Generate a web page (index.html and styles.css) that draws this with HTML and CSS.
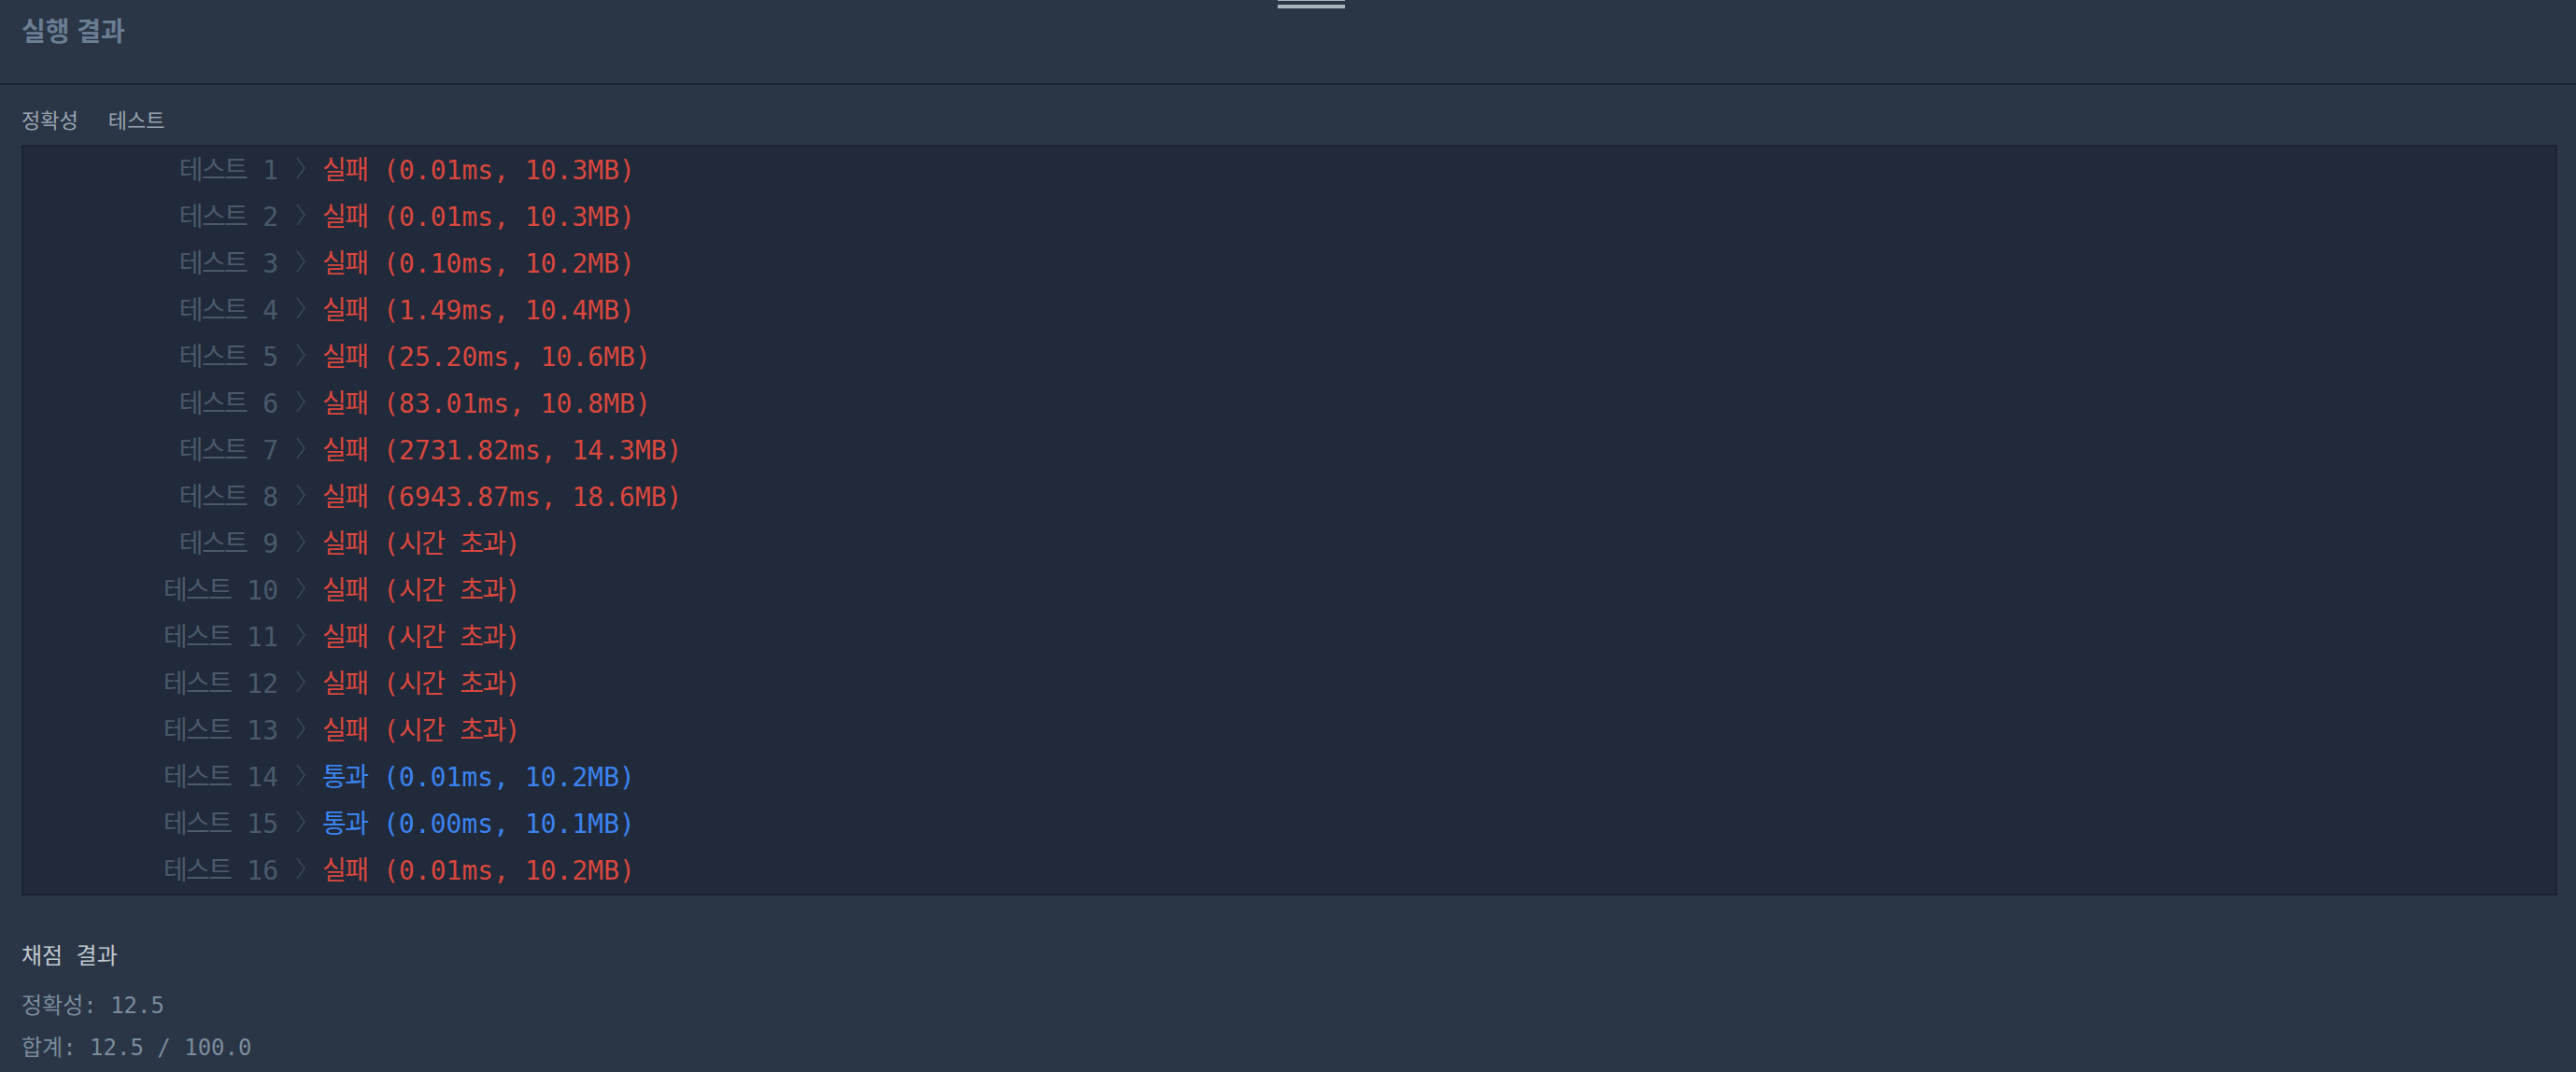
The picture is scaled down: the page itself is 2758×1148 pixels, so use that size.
FILE: index.html
```html
<!DOCTYPE html>
<html lang="ko">
<head>
    <meta charset="UTF-8">
    <meta name="viewport" content="width=device-width, initial-scale=1.0">
    <title>실행 결과</title>
    <link rel="stylesheet" href="styles.css">
</head>
<body>

    <div class="resize-handle">
        <span class="bar bar-top"></span>
        <span class="bar bar-bottom"></span>
    </div>

    <div class="header">
        <h2 class="title">실행 결과</h2>
    </div>

    <div class="content">
        <div class="tabs">
            <span>정확성</span>
            <span>테스트</span>
        </div>

        <div class="result-box">
            <div class="row"><span class="label"><span class="ko">테스트</span> 1</span><svg class="chevron" viewBox="0 0 10 24"><polyline points="1,1 9,12 1,23"/></svg><span class="fail"><span class="ko">실패</span> (0.01ms, 10.3MB)</span></div>
            <div class="row"><span class="label"><span class="ko">테스트</span> 2</span><svg class="chevron" viewBox="0 0 10 24"><polyline points="1,1 9,12 1,23"/></svg><span class="fail"><span class="ko">실패</span> (0.01ms, 10.3MB)</span></div>
            <div class="row"><span class="label"><span class="ko">테스트</span> 3</span><svg class="chevron" viewBox="0 0 10 24"><polyline points="1,1 9,12 1,23"/></svg><span class="fail"><span class="ko">실패</span> (0.10ms, 10.2MB)</span></div>
            <div class="row"><span class="label"><span class="ko">테스트</span> 4</span><svg class="chevron" viewBox="0 0 10 24"><polyline points="1,1 9,12 1,23"/></svg><span class="fail"><span class="ko">실패</span> (1.49ms, 10.4MB)</span></div>
            <div class="row"><span class="label"><span class="ko">테스트</span> 5</span><svg class="chevron" viewBox="0 0 10 24"><polyline points="1,1 9,12 1,23"/></svg><span class="fail"><span class="ko">실패</span> (25.20ms, 10.6MB)</span></div>
            <div class="row"><span class="label"><span class="ko">테스트</span> 6</span><svg class="chevron" viewBox="0 0 10 24"><polyline points="1,1 9,12 1,23"/></svg><span class="fail"><span class="ko">실패</span> (83.01ms, 10.8MB)</span></div>
            <div class="row"><span class="label"><span class="ko">테스트</span> 7</span><svg class="chevron" viewBox="0 0 10 24"><polyline points="1,1 9,12 1,23"/></svg><span class="fail"><span class="ko">실패</span> (2731.82ms, 14.3MB)</span></div>
            <div class="row"><span class="label"><span class="ko">테스트</span> 8</span><svg class="chevron" viewBox="0 0 10 24"><polyline points="1,1 9,12 1,23"/></svg><span class="fail"><span class="ko">실패</span> (6943.87ms, 18.6MB)</span></div>
            <div class="row"><span class="label"><span class="ko">테스트</span> 9</span><svg class="chevron" viewBox="0 0 10 24"><polyline points="1,1 9,12 1,23"/></svg><span class="fail"><span class="ko">실패</span> (<span class="ko">시간</span> <span class="ko">초과</span>)</span></div>
            <div class="row"><span class="label"><span class="ko">테스트</span> 10</span><svg class="chevron" viewBox="0 0 10 24"><polyline points="1,1 9,12 1,23"/></svg><span class="fail"><span class="ko">실패</span> (<span class="ko">시간</span> <span class="ko">초과</span>)</span></div>
            <div class="row"><span class="label"><span class="ko">테스트</span> 11</span><svg class="chevron" viewBox="0 0 10 24"><polyline points="1,1 9,12 1,23"/></svg><span class="fail"><span class="ko">실패</span> (<span class="ko">시간</span> <span class="ko">초과</span>)</span></div>
            <div class="row"><span class="label"><span class="ko">테스트</span> 12</span><svg class="chevron" viewBox="0 0 10 24"><polyline points="1,1 9,12 1,23"/></svg><span class="fail"><span class="ko">실패</span> (<span class="ko">시간</span> <span class="ko">초과</span>)</span></div>
            <div class="row"><span class="label"><span class="ko">테스트</span> 13</span><svg class="chevron" viewBox="0 0 10 24"><polyline points="1,1 9,12 1,23"/></svg><span class="fail"><span class="ko">실패</span> (<span class="ko">시간</span> <span class="ko">초과</span>)</span></div>
            <div class="row"><span class="label"><span class="ko">테스트</span> 14</span><svg class="chevron" viewBox="0 0 10 24"><polyline points="1,1 9,12 1,23"/></svg><span class="pass"><span class="ko">통과</span> (0.01ms, 10.2MB)</span></div>
            <div class="row"><span class="label"><span class="ko">테스트</span> 15</span><svg class="chevron" viewBox="0 0 10 24"><polyline points="1,1 9,12 1,23"/></svg><span class="pass"><span class="ko">통과</span> (0.00ms, 10.1MB)</span></div>
            <div class="row"><span class="label"><span class="ko">테스트</span> 16</span><svg class="chevron" viewBox="0 0 10 24"><polyline points="1,1 9,12 1,23"/></svg><span class="fail"><span class="ko">실패</span> (0.01ms, 10.2MB)</span></div>
        </div>

        <div class="score">
            <h3>채점 결과</h3>
            <p>정확성: 12.5</p>
            <p>합계: 12.5 / 100.0</p>
        </div>
    </div>

</body>
</html>
```

FILE: styles.css
```css
body {
    margin: 0;
    background-color: #2a3546;
    font-family: "Noto Sans CJK KR", "Noto Sans", sans-serif;
    height: 1148px;
    overflow: hidden;
}
.resize-handle {
    position: absolute;
    top: 0;
    left: 1368px;
    width: 72px;
    height: 10px;
}
.bar {
    position: absolute;
    left: 0;
    width: 72px;
    background-color: #aab5bf;
}
.bar-top {
    top: 0;
    height: 1px;
}
.bar-bottom {
    top: 5px;
    height: 4px;
}
.header {
    height: 89px;
    padding: 0 23px;
    border-bottom: 2px solid #1d2532;
}
.title {
    margin: 0;
    padding-top: 12px;
    font-size: 28px;
    line-height: 40px;
    font-weight: bold;
    color: #6a7d92;
}
.content {
    padding: 0 20px 0 23px;
}
.tabs {
    margin-top: 20px;
    display: flex;
    gap: 32px;
    font-size: 22px;
    line-height: 32px;
    color: #98a4b0;
}
.result-box {
    margin-top: 12px;
    background-color: #212a3a;
    border: 2px solid #1c2432;
    font-family: "DejaVu Sans Mono", "Noto Sans CJK KR", monospace;
    font-size: 28px;
}
.row {
    display: flex;
    align-items: center;
    height: 50px;
    padding-bottom: 4px;
    box-sizing: border-box;
    white-space: pre;
}
.ko {
    letter-spacing: -1.6px;
}
.label {
    width: 273px;
    text-align: right;
    color: #4b596a;
}
.chevron {
    width: 10px;
    height: 24px;
    margin: 0 18px 0 19px;
    fill: none;
    stroke: #3a4657;
    stroke-width: 1.6;
}
.fail {
    color: #d9473e;
}
.pass {
    color: #3b83f0;
}
.score {
    margin-top: 47px;
    font-family: "DejaVu Sans Mono", "Noto Sans CJK KR", monospace;
    font-size: 24px;
}
.score h3 {
    margin: 0 0 13px;
    font-size: 24px;
    font-weight: normal;
    line-height: 36px;
    color: #c0c8d0;
}
.score p {
    margin: 0;
    line-height: 45px;
    color: #7b8c9c;
}
```
